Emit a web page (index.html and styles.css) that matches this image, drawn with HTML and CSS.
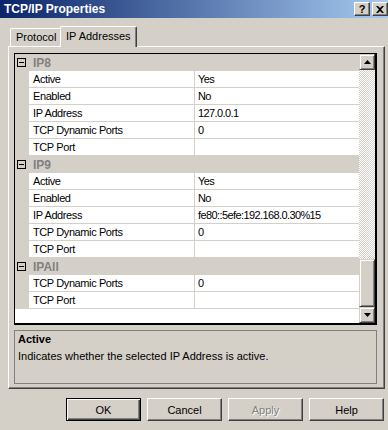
FILE: index.html
```html
<!DOCTYPE html>
<html>
<head>
<meta charset="utf-8">
<link rel="stylesheet" href="styles.css">
</head>
<body>
<div class="titlebar">
  <span class="title">TCP/IP Properties</span>
  <div class="tbtns">
    <div class="tbtn">?</div>
    <div class="tbtn"><svg width="8" height="7" viewBox="0 0 8 7"><path d="M0 0h2l2 2 2-2h2L5 3.5 8 7H6L4 5 2 7H0l3-3.5z" fill="#000"/></svg></div>
  </div>
</div>
<div class="dialog">
  <div class="tabs">
    <div class="tab">Protocol</div>
    <div class="tab active">IP Addresses</div>
  </div>
  <div class="panel">
    <div class="grid">
      <div class="rows">
        <div class="cat"><span class="exp"></span><span class="catname">IP8</span></div>
        <div class="row"><div class="name">Active</div><div class="val">Yes</div></div>
        <div class="row"><div class="name">Enabled</div><div class="val">No</div></div>
        <div class="row"><div class="name">IP Address</div><div class="val">127.0.0.1</div></div>
        <div class="row"><div class="name">TCP Dynamic Ports</div><div class="val">0</div></div>
        <div class="row"><div class="name">TCP Port</div><div class="val"></div></div>
        <div class="cat"><span class="exp"></span><span class="catname">IP9</span></div>
        <div class="row"><div class="name">Active</div><div class="val">Yes</div></div>
        <div class="row"><div class="name">Enabled</div><div class="val">No</div></div>
        <div class="row"><div class="name">IP Address</div><div class="val">fe80::5efe:192.168.0.30%15</div></div>
        <div class="row"><div class="name">TCP Dynamic Ports</div><div class="val">0</div></div>
        <div class="row"><div class="name">TCP Port</div><div class="val"></div></div>
        <div class="cat"><span class="exp"></span><span class="catname">IPAll</span></div>
        <div class="row"><div class="name">TCP Dynamic Ports</div><div class="val">0</div></div>
        <div class="row"><div class="name">TCP Port</div><div class="val"></div></div>
      </div>
      <div class="scrollbar">
        <div class="sbtn"><svg width="7" height="4" viewBox="0 0 7 4"><path d="M3.5 0L7 4H0z" fill="#000"/></svg></div>
        <div class="track"></div>
        <div class="thumb"></div>
        <div class="sbtn"><svg width="7" height="4" viewBox="0 0 7 4"><path d="M0 0h7L3.5 4z" fill="#000"/></svg></div>
      </div>
    </div>
    <div class="desc">
      <div class="dtitle">Active</div>
      <div class="dtext">Indicates whether the selected IP Address is active.</div>
    </div>
  </div>
  <div class="buttons">
    <div class="btn default"><span>OK</span></div>
    <div class="btn"><span>Cancel</span></div>
    <div class="btn disabled"><span>Apply</span></div>
    <div class="btn"><span>Help</span></div>
  </div>
</div>
</body>
</html>
```
FILE: styles.css
```css
html, body {
  margin: 0;
  padding: 0;
}
body {
  background: #d4d0c8;
  font-family: "Liberation Sans", Arial, sans-serif;
  font-size: 11px;
  color: #000;
  width: 388px;
  height: 430px;
  overflow: hidden;
}
.titlebar {
  height: 18px;
  background: linear-gradient(to right, #0a246a, #a6caf0);
  display: flex;
  align-items: center;
  justify-content: space-between;
}
.title {
  color: #fff;
  font-weight: bold;
  font-size: 12px;
  padding-left: 4px;
}
.tbtns {
  display: flex;
  gap: 2px;
}
.tbtn {
  width: 16px;
  height: 14px;
  box-sizing: border-box;
  background: #d4d0c8;
  border: 1px solid;
  border-color: #fff #404040 #404040 #fff;
  box-shadow: inset -1px -1px #808080;
  display: flex;
  align-items: center;
  justify-content: center;
  font-weight: bold;
  font-size: 11px;
  line-height: 12px;
}
.dialog {
  padding-top: 8px;
}
.tabs {
  display: flex;
  align-items: flex-end;
  height: 20px;
  margin-left: 8px;
}
.tab {
  height: 18px;
  box-sizing: border-box;
  width: 52px;
  margin-left: 2px;
  border-top: 1px solid #fff;
  border-left: 1px solid #fff;
  border-right: 1px solid #404040;
  box-shadow: inset -1px 0 #808080;
  border-radius: 2px 2px 0 0;
  padding-left: 5px;
  line-height: 17px;
  background: #d4d0c8;
}
.tab.active {
  height: 21px;
  width: 77px;
  margin-left: -2px;
  margin-bottom: -1px;
  position: relative;
  z-index: 1;
  line-height: 18px;
  padding-left: 5px;
}
.panel {
  margin-left: 8px;
  width: 377px;
  height: 343px;
  box-sizing: border-box;
  border-top: 1px solid #fff;
  border-left: 1px solid #fff;
  border-right: 1px solid #404040;
  border-bottom: 1px solid #404040;
  box-shadow: inset -1px -1px #808080;
  padding: 6px 0 0 5px;
}
.grid {
  width: 363px;
  height: 272px;
  box-sizing: border-box;
  border: 1px solid #000;
  border-right-width: 2px;
  border-bottom-width: 2px;
  background: #fff;
  display: flex;
}
.rows {
  flex: 1;
}
.cat {
  height: 17px;
  background: #d4d0c8;
  display: flex;
  align-items: center;
}
.exp {
  width: 9px;
  height: 9px;
  box-sizing: border-box;
  border: 1px solid #000;
  margin-left: 2px;
  margin-right: 7px;
  position: relative;
  background: #d4d0c8;
}
.exp::after {
  content: "";
  position: absolute;
  left: 1px;
  top: 3px;
  width: 5px;
  height: 1px;
  background: #000;
}
.catname {
  font-weight: bold;
  color: #808080;
  font-size: 12px;
}
.row {
  display: flex;
  height: 17px;
  padding-left: 14px;
  background: #d4d0c8;
}
.name {
  width: 166px;
  box-sizing: border-box;
  background: #fff;
  border-right: 1px solid #d4d0c8;
  border-bottom: 1px solid #d4d0c8;
  padding-left: 4px;
  line-height: 16px;
  white-space: nowrap;
  letter-spacing: -0.4px;
}
.val {
  flex: 1;
  background: #fff;
  border-bottom: 1px solid #d4d0c8;
  padding-left: 3px;
  line-height: 16px;
  white-space: nowrap;
  letter-spacing: -0.6px;
}
.scrollbar {
  width: 16px;
  display: flex;
  flex-direction: column;
}
.sbtn, .thumb {
  box-sizing: border-box;
  background: #d4d0c8;
  border: 1px solid;
  border-color: #d4d0c8 #404040 #404040 #d4d0c8;
  box-shadow: inset 1px 1px #fff, inset -1px -1px #808080;
}
.sbtn {
  height: 16px;
  display: flex;
  align-items: center;
  justify-content: center;
}
.thumb {
  height: 48px;
}
.track {
  flex: 1;
  background-color: #d4d0c8;
  background-image: conic-gradient(#fff 25%, #d4d0c8 0 50%, #fff 0 75%, #d4d0c8 0);
  background-size: 2px 2px;
}
.desc {
  margin-top: 5px;
  width: 363px;
  height: 54px;
  box-sizing: border-box;
  border: 1px solid #808080;
  padding: 0 3px;
  line-height: 17px;
}
.dtitle {
  font-weight: bold;
}
.buttons {
  display: flex;
  gap: 6px;
  margin-top: 9px;
  margin-left: 66px;
}
.btn {
  width: 75px;
  height: 23px;
  box-sizing: border-box;
  border: 1px solid;
  border-color: #fff #404040 #404040 #fff;
  box-shadow: inset -1px -1px #808080;
  display: flex;
  align-items: center;
  justify-content: center;
}
.btn.default {
  border: 1px solid #000;
  box-shadow: inset 1px 1px #fff, inset -1px -1px #404040, inset -2px -2px #808080;
}
.btn.disabled {
  color: #808080;
  text-shadow: 1px 1px #fff;
}
```
